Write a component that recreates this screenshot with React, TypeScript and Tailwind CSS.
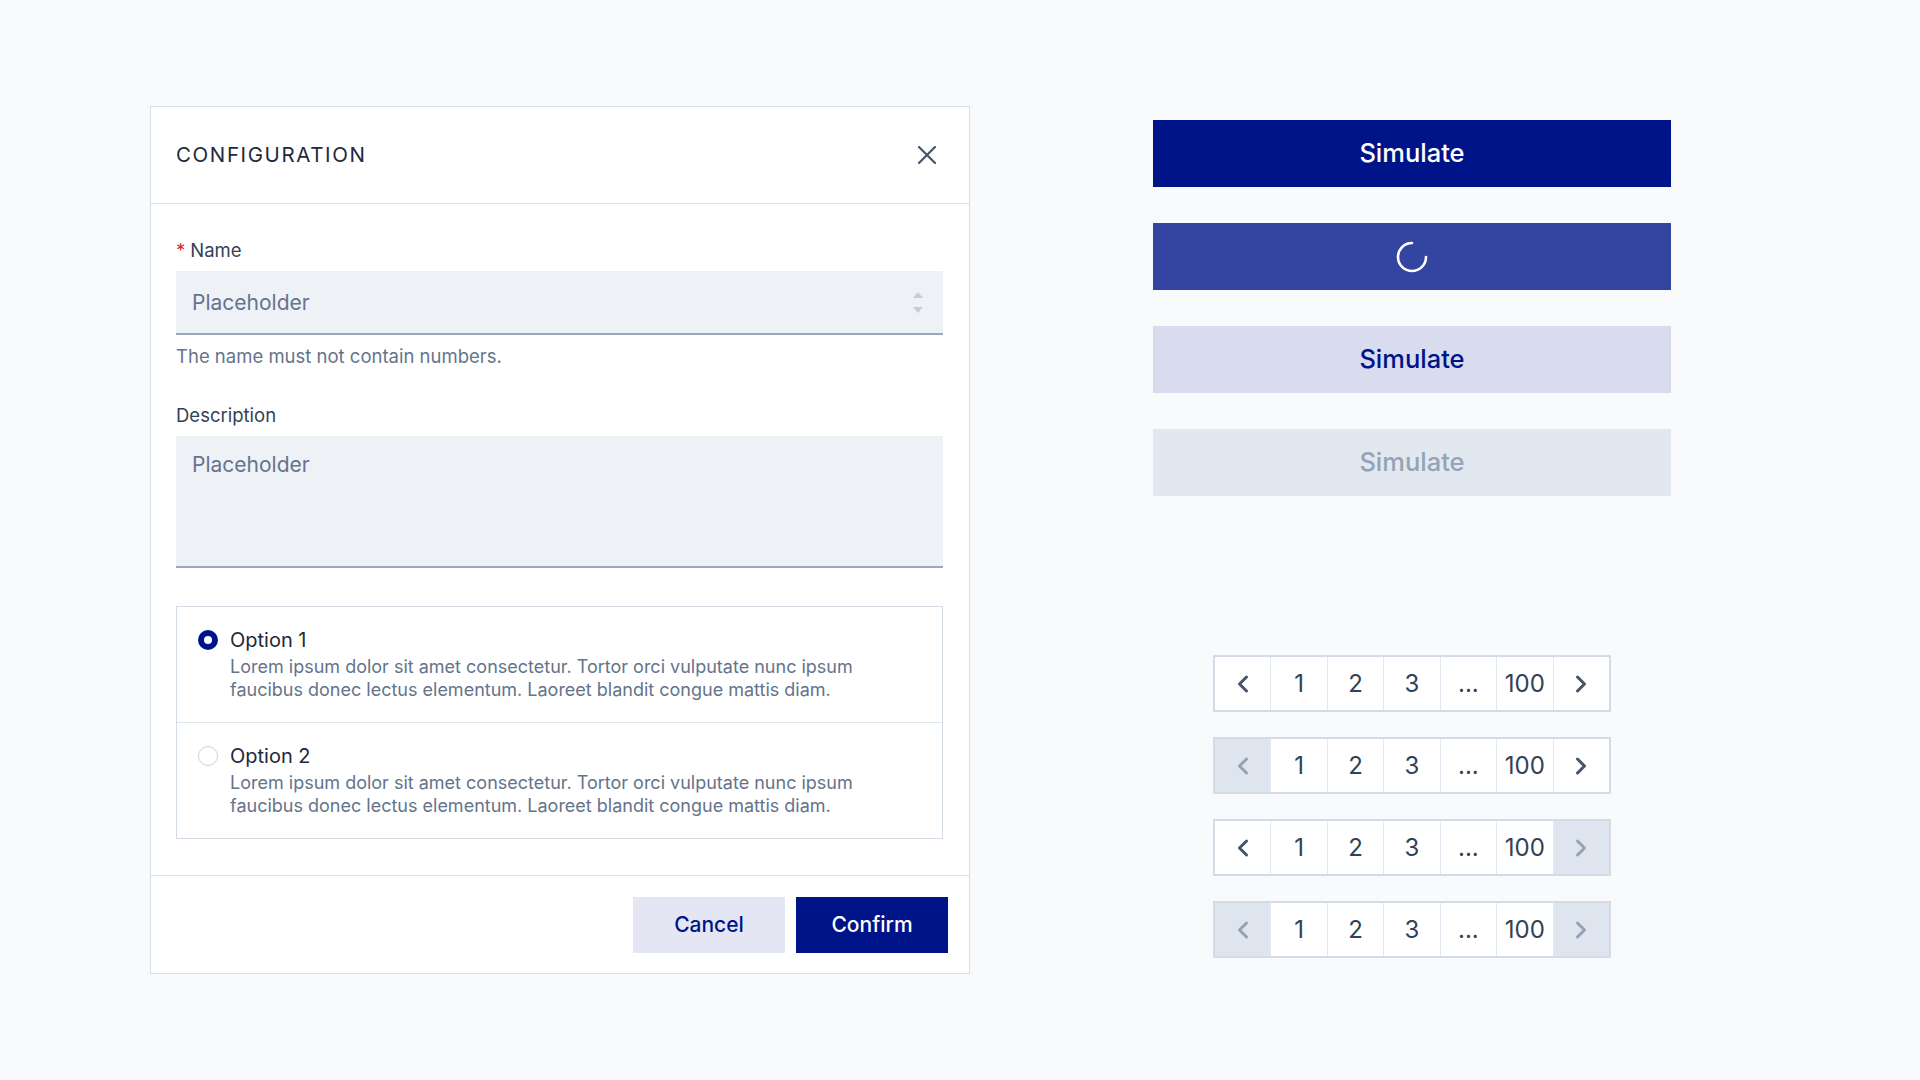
import { ChevronLeft, ChevronRight } from "lucide-react";

const font = { fontFamily: "Inter, 'Noto Sans', sans-serif" };

function Radio({ checked }: { checked: boolean }) {
  return checked ? (
    <span className="flex h-[20px] w-[20px] shrink-0 items-center justify-center rounded-full bg-[#001489]">
      <span className="h-[8px] w-[8px] rounded-full bg-white" />
    </span>
  ) : (
    <span className="h-[20px] w-[20px] shrink-0 rounded-full border border-[#cbd3de] bg-white" />
  );
}

function Option({ label, checked }: { label: string; checked: boolean }) {
  return (
    <div className="flex gap-[12px] pt-[21px] pr-[20px] pb-[21px] pl-[21px]">
      <div className="flex h-[24px] items-center">
        <Radio checked={checked} />
      </div>
      <div className="flex flex-col gap-[3px]">
        <span className="text-[20px] leading-[24px] text-[#1e293b]">{label}</span>
        <p className="max-w-[665px] text-[18px] leading-[23px] text-[#64748b]">
          Lorem ipsum dolor sit amet consectetur. Tortor orci vulputate nunc ipsum faucibus donec lectus
          elementum. Laoreet blandit congue mattis diam.
        </p>
      </div>
    </div>
  );
}

function Spinner() {
  return (
    <svg width="32" height="32" viewBox="0 0 32 32" fill="none">
      <path d="M16 2 A14 14 0 1 0 30 16" stroke="white" strokeWidth="2.6" strokeLinecap="round" />
    </svg>
  );
}

function Pager({ prevOff, nextOff }: { prevOff?: boolean; nextOff?: boolean }) {
  const cell = "flex flex-1 items-center justify-center";
  return (
    <div className="flex h-[57px] w-[398px] divide-x divide-[#e2e8f0] border-2 border-[#d3dbe6] bg-white text-[24px] text-[#334155]">
      <div className={`${cell} ${prevOff ? "bg-[#dfe5ee] text-[#94a3b8]" : "text-[#475569]"}`}>
        <ChevronLeft size={28} strokeWidth={2.6} />
      </div>
      <div className={cell}>1</div>
      <div className={cell}>2</div>
      <div className={cell}>3</div>
      <div className={cell}>...</div>
      <div className={cell}>100</div>
      <div className={`${cell} ${nextOff ? "bg-[#dfe5ee] text-[#94a3b8]" : "text-[#475569]"}`}>
        <ChevronRight size={28} strokeWidth={2.6} />
      </div>
    </div>
  );
}

export default function App() {
  return (
    <div style={font} className="flex h-[1080px] w-[1920px] items-start bg-[#f8fafc] pt-[106px] pl-[150px]">
      {/* Configuration dialog */}
      <div className="flex w-[820px] flex-col border border-[#d8dfe8] bg-white">
        <div className="flex h-[97px] items-center justify-between border-b border-[#d8dfe8] pr-[33px] pl-[25px]">
          <h2 className="text-[20.5px] tracking-[1.6px] text-[#1e293b]">CONFIGURATION</h2>
          <svg width="18" height="18" viewBox="0 0 18 18" fill="none">
            <path d="M1 1L17 17M17 1L1 17" stroke="#475569" strokeWidth="2.2" strokeLinecap="round" />
          </svg>
        </div>

        <div className="flex flex-col pt-[34px] pr-[26px] pb-[36px] pl-[25px]">
          <label className="text-[18.5px] leading-[24px] text-[#334155]">
            <span className="mr-[5px] text-[#dc2626]">*</span>Name
          </label>
          <div className="mt-[9px] flex h-[64px] items-center justify-between border-b-2 border-[#9aa8bb] bg-[#eef2f7] pr-[20px] pl-[16px]">
            <span className="pt-[2px] text-[21px] text-[#64748b]">Placeholder</span>
            <div className="flex flex-col items-center gap-[9px]">
              <span className="h-0 w-0 border-x-[5px] border-b-[6px] border-x-transparent border-b-[#c5cdd8]" />
              <span className="h-0 w-0 border-x-[5px] border-t-[6px] border-x-transparent border-t-[#c5cdd8]" />
            </div>
          </div>
          <p className="mt-[9px] text-[18.5px] leading-[24px] text-[#64748b]">The name must not contain numbers.</p>

          <label className="mt-[35px] text-[18.5px] leading-[24px] text-[#334155]">Description</label>
          <div className="mt-[9px] h-[132px] border-b-2 border-[#9aa8bb] bg-[#eef2f7] px-[16px] pt-[17px]">
            <span className="text-[21px] leading-[24px] text-[#64748b]">Placeholder</span>
          </div>

          <div className="mt-[38px] flex flex-col divide-y divide-[#dfe5ed] border border-[#d3dbe5]">
            <Option label="Option 1" checked />
            <Option label="Option 2" checked={false} />
          </div>
        </div>

        <div className="flex h-[98px] items-center justify-end gap-[11px] border-t border-[#d8dfe8] pr-[21px]">
          <button className="h-[56px] w-[152px] bg-[#e4e7f3] text-[21px] font-medium text-[#001489]">Cancel</button>
          <button className="h-[56px] w-[152px] bg-[#001489] text-[21px] font-medium text-white">Confirm</button>
        </div>
      </div>

      {/* Buttons and pagination */}
      <div className="ml-[183px] flex w-[518px] flex-col items-center pt-[14px]">
        <div className="flex w-full flex-col gap-[36px]">
          <button className="h-[67px] w-full bg-[#001489] text-[25.5px] font-medium text-white">Simulate</button>
          <button className="flex h-[67px] w-full items-center justify-center bg-[#3445a1]">
            <Spinner />
          </button>
          <button className="h-[67px] w-full bg-[#d9dcef] text-[25.5px] font-medium text-[#001489]">Simulate</button>
          <button className="h-[67px] w-full bg-[#e2e8f0] text-[25.5px] font-medium text-[#94a3b8]">Simulate</button>
        </div>

        <div className="mt-[159px] flex flex-col gap-[25px]">
          <Pager />
          <Pager prevOff />
          <Pager nextOff />
          <Pager prevOff nextOff />
        </div>
      </div>
    </div>
  );
}
